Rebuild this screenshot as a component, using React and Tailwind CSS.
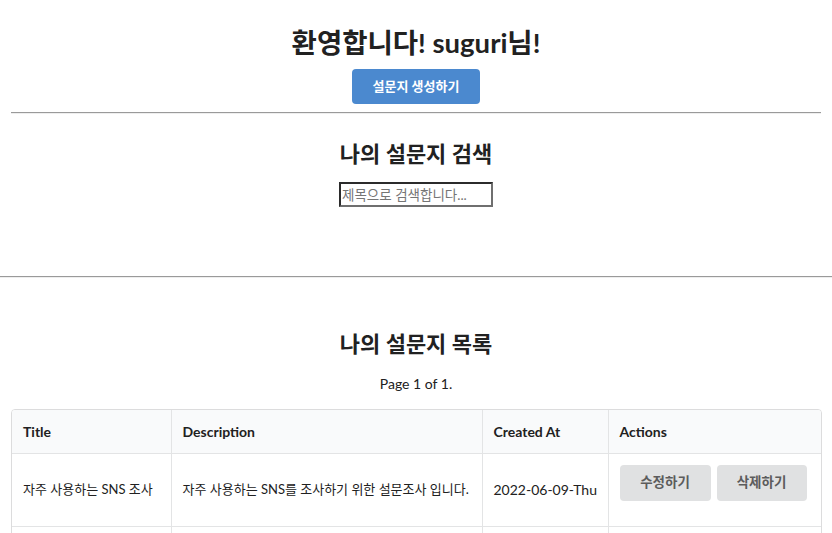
export default function App() {
  return (
    <div className="min-h-[533px] bg-white font-['Lato','Noto_Sans_CJK_KR',sans-serif] text-[14px] text-[#212121]">
      <div className="flex flex-col items-center px-[11px] pt-[25px]">
        <h1 className="text-[27.5px] font-bold leading-[36px]">환영합니다! suguri님!</h1>
        <button className="mt-[8px] flex h-[35px] w-[128px] items-center justify-center rounded-[4px] bg-[#4b89cf] text-[13px] font-bold text-white">
          설문지 생성하기
        </button>
        <div className="mt-[8px] w-full border-t border-b border-t-[#9a9a9a] border-b-[#eeeeee]" />
      </div>

      <div className="flex flex-col items-center">
        <h2 className="mt-[25px] text-[22px] font-bold leading-[30px]">나의 설문지 검색</h2>
        <input
          placeholder="제목으로 검색합니다..."
          className="mt-[13px] h-[25px] w-[154px] border-2 border-t-[#2b2b2b] border-l-[#2b2b2b] border-r-[#6f6f6f] border-b-[#6f6f6f] px-[1px] text-[13.5px] placeholder:text-[#757575]"
        />
        <div className="mt-[69px] w-full border-t border-b border-t-[#9a9a9a] border-b-[#eeeeee]" />
      </div>

      <div className="flex flex-col items-center">
        <h2 className="mt-[51px] text-[22px] font-bold leading-[30px]">나의 설문지 목록</h2>
        <p className="mt-[15px] leading-[20px]">Page 1 of 1.</p>
        <div className="mt-[15px] ml-[11px] mr-[10px] self-stretch overflow-hidden rounded-[4px] border border-[#dcdcdd]">
          <table className="w-full table-fixed border-collapse text-left">
            <colgroup>
              <col className="w-[159px]" />
              <col className="w-[311px]" />
              <col className="w-[126px]" />
              <col />
            </colgroup>
            <thead className="bg-[#f9fafb]">
              <tr className="h-[43px] border-b border-[#e3e4e5]">
                <th className="px-[11px] font-bold">Title</th>
                <th className="border-l border-[#e3e4e5] px-[11px] font-bold">Description</th>
                <th className="border-l border-[#e3e4e5] px-[11px] font-bold">Created At</th>
                <th className="border-l border-[#e3e4e5] px-[11px] font-bold">Actions</th>
              </tr>
            </thead>
            <tbody>
              <tr className="h-[73px] border-b border-[#e3e4e5]">
                <td className="whitespace-nowrap px-[11px] align-middle text-[13px]">자주 사용하는 SNS 조사</td>
                <td className="whitespace-nowrap border-l border-[#e3e4e5] px-[11px] align-middle text-[13px]">자주 사용하는 SNS를 조사하기 위한 설문조사 입니다.</td>
                <td className="whitespace-nowrap border-l border-[#e3e4e5] px-[11px] align-middle">2022-06-09-Thu</td>
                <td className="border-l border-[#e3e4e5] px-[11px] pt-[11px] pb-[25px] align-top">
                  <div className="flex gap-[6px]">
                    <button className="flex h-[36px] w-[91px] items-center justify-center rounded-[4px] bg-[#e0e1e2] text-[13.5px] font-bold text-[#5c5c5c]">수정하기</button>
                    <button className="flex h-[36px] w-[90px] items-center justify-center rounded-[4px] bg-[#e0e1e2] text-[13.5px] font-bold text-[#5c5c5c]">삭제하기</button>
                  </div>
                </td>
              </tr>
              <tr className="h-[40px]">
                <td className="px-[11px]"></td>
                <td className="border-l border-[#e3e4e5] px-[11px]"></td>
                <td className="border-l border-[#e3e4e5] px-[11px]"></td>
                <td className="border-l border-[#e3e4e5] px-[11px]"></td>
              </tr>
            </tbody>
          </table>
        </div>
      </div>
    </div>
  );
}
